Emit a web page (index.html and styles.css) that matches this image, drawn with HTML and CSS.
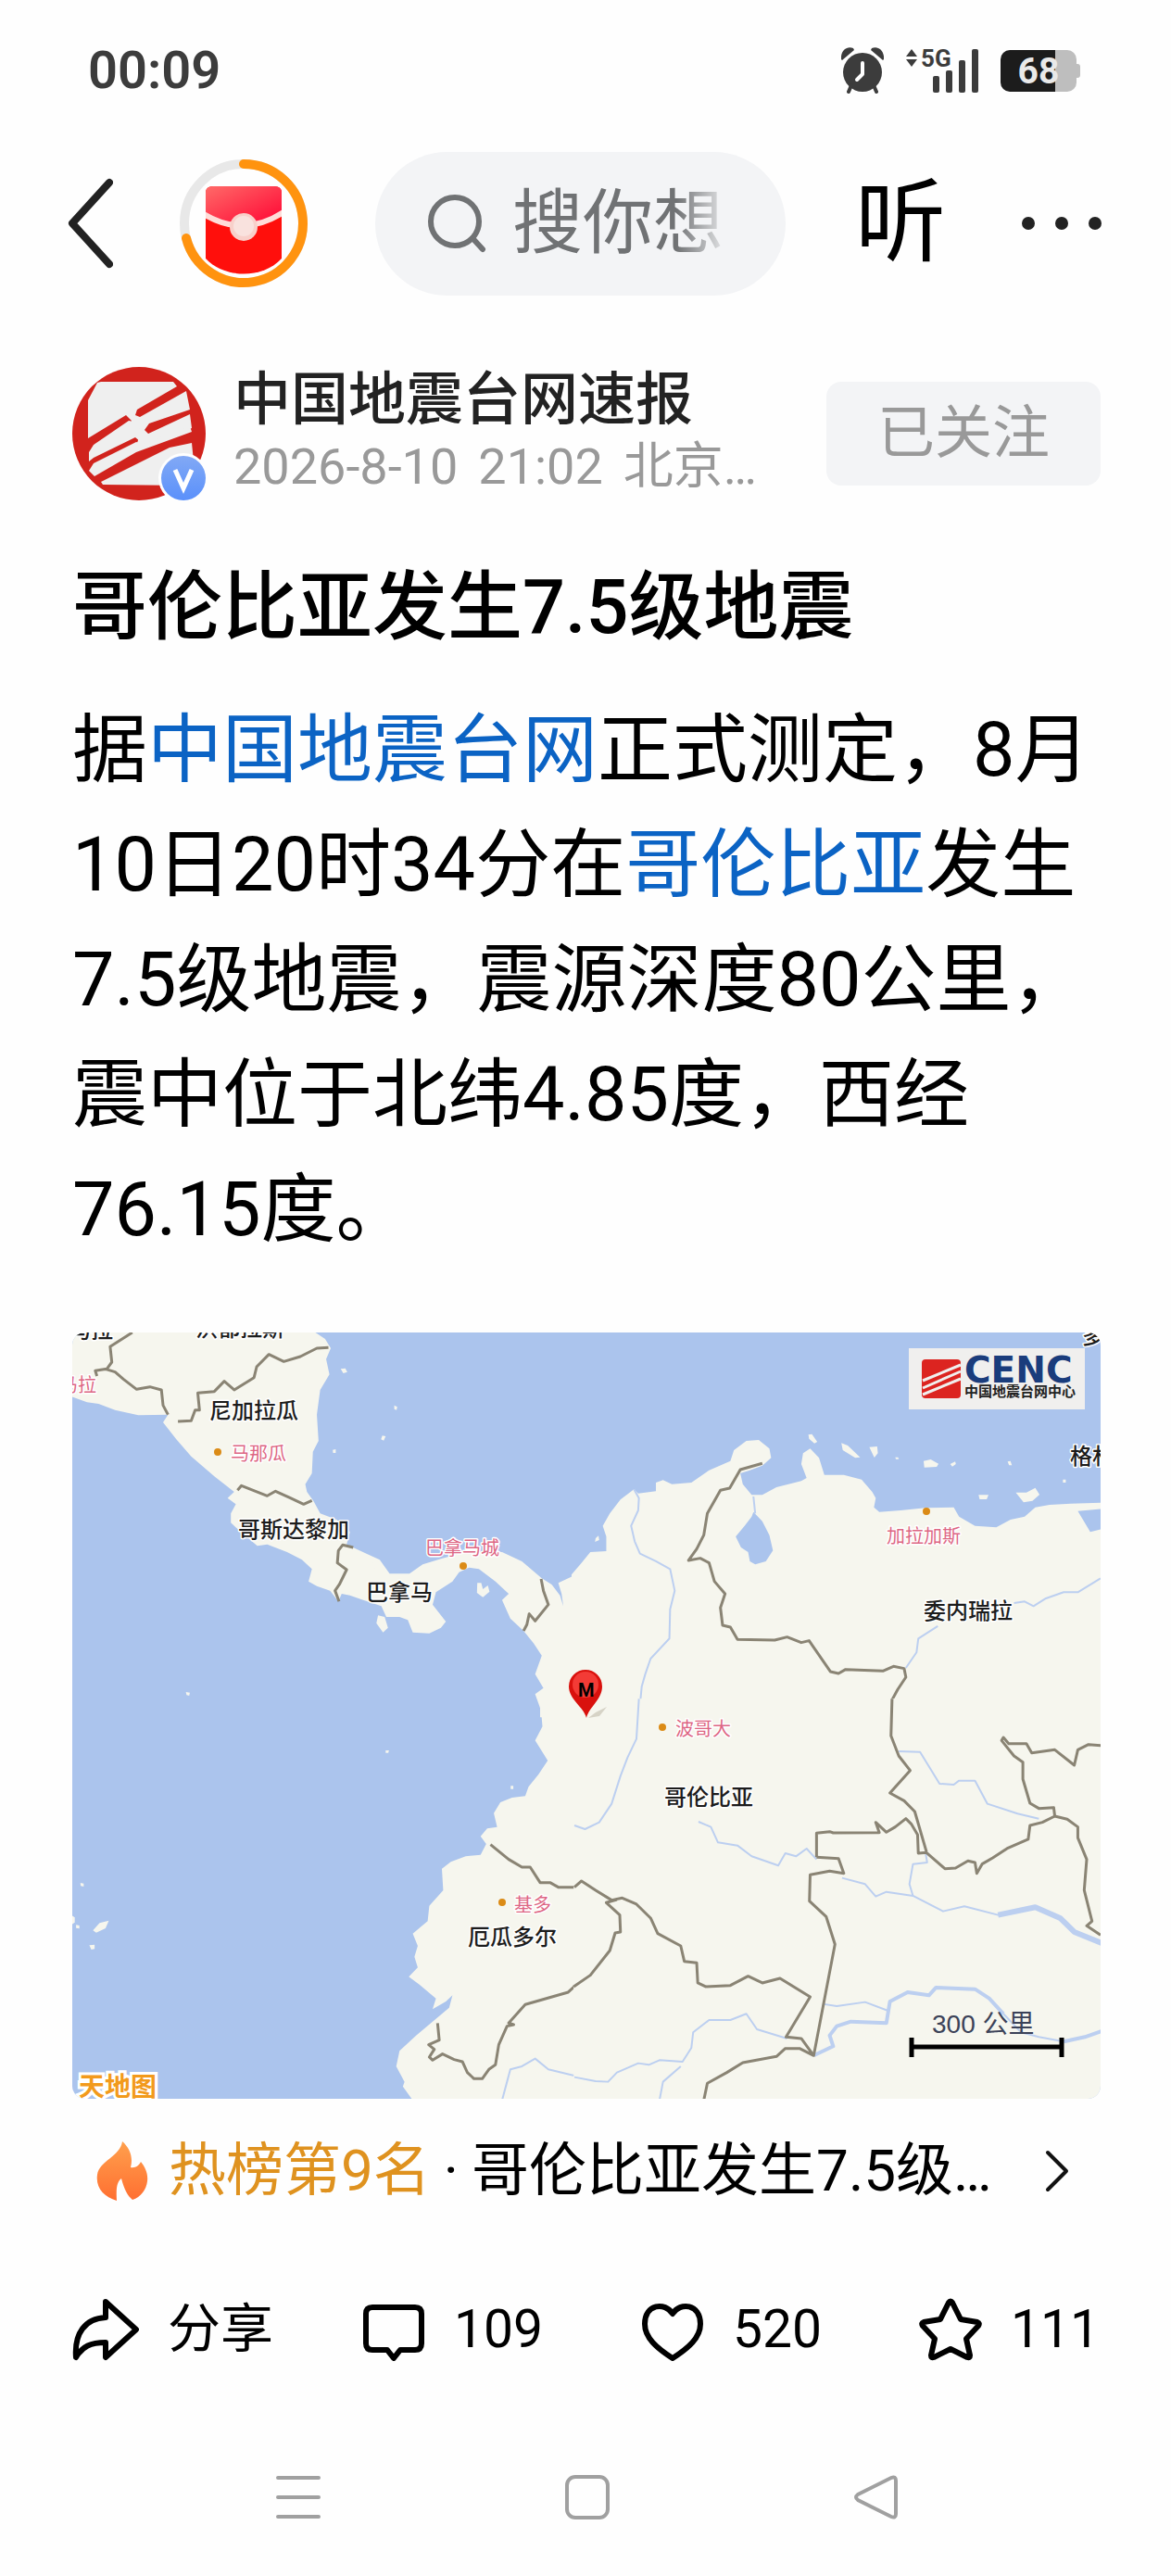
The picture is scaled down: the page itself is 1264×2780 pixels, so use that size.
FILE: index.html
```html
<!DOCTYPE html>
<html lang="zh-CN">
<head>
<meta charset="utf-8">
<meta name="viewport" content="width=device-width, initial-scale=1">
<title>哥伦比亚发生7.5级地震</title>
<link rel="stylesheet" href="styles.css">
</head>
<body>
<div class="status-bar">
  <span class="clock">00:09</span>
  <div class="status-icons">
    <svg class="alarm" viewBox="0 0 46 50" aria-hidden="true">
      <path d="M0 13C-1 4 6-2 13 1l1 2L1 14zM46 13C47 4 40-2 33 1l-1 2 13 11z" fill="#3c3c3c"/>
      <circle cx="23" cy="27" r="21" fill="#3c3c3c"/>
      <path d="M11 41l-3 7M35 41l3 7" stroke="#3c3c3c" stroke-width="4" stroke-linecap="round"/>
      <path d="M23 17v12l-6 6" fill="none" stroke="#fff" stroke-width="4" stroke-linecap="round" stroke-linejoin="round"/>
    </svg>
    <div class="signal">
      <svg viewBox="0 0 80 50" aria-hidden="true">
        <g fill="#3c3c3c">
          <path d="M7 2l6 8H1zM7 21l6-8H1z"/>
          <rect x="30" y="31" width="7" height="18" rx="2"/>
          <rect x="44" y="25" width="7" height="24" rx="2"/>
          <rect x="58" y="14" width="7" height="35" rx="2"/>
          <rect x="72" y="2" width="7" height="47" rx="2"/>
        </g>
      </svg>
      <span class="network">5G</span>
    </div>
    <div class="battery"><span class="battery-cell">68</span></div>
  </div>
</div>

<header class="top-bar">
  <button class="icon-button" type="button" aria-label="返回">
    <svg width="50" height="98" viewBox="0 0 50 98"><path d="M46 5L6 49l40 44" fill="none" stroke="#222" stroke-width="8" stroke-linecap="round" stroke-linejoin="round"/></svg>
  </button>
  <button class="icon-button" type="button" aria-label="红包">
    <svg width="139" height="139" viewBox="0 0 139 139">
      <defs>
        <linearGradient id="packet-top" x1="0" y1="0" x2="1" y2="1"><stop offset="0" stop-color="#ff6a68"/><stop offset="1" stop-color="#ff0433"/></linearGradient>
        <clipPath id="packet-clip"><path d="M28 36q0-7 8-7h66q8 0 8 7v71c-20 22-62 22-82 0z"/></clipPath>
      </defs>
      <circle cx="69" cy="69" r="64" fill="none" stroke="#e8e8e8" stroke-width="10"/>
      <path d="M69 5A64 64 0 1 1 7 85" fill="none" stroke="#ff930f" stroke-width="10" stroke-linecap="round"/>
      <g clip-path="url(#packet-clip)">
        <path d="M28 29h82v100H28z" fill="#ff0f0c"/>
        <path d="M28 29h82v30q-41 22-82 0z" fill="url(#packet-top)"/>
        <path d="M26 59q43 26 86-2" fill="none" stroke="#ffdcd8" stroke-width="6"/>
      </g>
      <circle cx="69" cy="73" r="15" fill="#f8d0ca"/>
      <circle cx="69" cy="72" r="11" fill="#f9e2de"/>
    </svg>
  </button>
  <label class="search">
    <svg width="64" height="64" viewBox="0 0 64 64" aria-hidden="true"><circle cx="30" cy="30" r="26" fill="none" stroke="#707274" stroke-width="6"/><path d="M49 48l11 12" stroke="#707274" stroke-width="6" stroke-linecap="round"/></svg>
    <input class="search-input" type="text" placeholder="搜你想" aria-label="搜索">
  </label>
  <button class="listen" type="button">听</button>
  <button class="icon-button" type="button" aria-label="更多">
    <svg width="96" height="20" viewBox="0 0 96 20"><g fill="#222"><circle cx="14" cy="10" r="7"/><circle cx="50" cy="10" r="7"/><circle cx="86" cy="10" r="7"/></g></svg>
  </button>
</header>

<main class="post">
  <section class="author">
    <div class="avatar">
      <svg width="144" height="144" viewBox="0 0 144 144" role="img" aria-label="中国地震台网速报">
        <defs><clipPath id="avatar-clip"><circle cx="72" cy="72" r="72"/></clipPath></defs>
        <g clip-path="url(#avatar-clip)">
          <path d="M0 0h144v144H0z" fill="#d1231d"/>
          <path d="M27 17l4-1 78 0 4 5-43 25-2 6 5 2 50-28 4 20-44 15-5 7 4 4 45-21 2 15-51 22-8-6 2-6-4-7-6-4 2-7-6-6L17 77V36z" fill="#efefef"/>
          <path d="M18 92l5-8 38-26 11 2 3 22-7-6-45 22-5 4zM18 112l5-8 46-23 8 2 50-19 2 6-60 22-45 26z" fill="#efefef"/>
          <path d="M31 124l74-37 24-5 2 20-8 26-90-1z" fill="#efefef"/>
        </g>
      </svg>
      <svg class="verified" width="54" height="54" viewBox="0 0 54 54" aria-label="认证">
        <defs><linearGradient id="badge" x1="0" y1="0" x2="0" y2="1"><stop offset="0" stop-color="#82a9f5"/><stop offset="1" stop-color="#5a90fb"/></linearGradient></defs>
        <circle cx="27" cy="27" r="27" fill="#fefefe"/><circle cx="27" cy="27" r="24" fill="url(#badge)"/>
        <path d="M18 18l9 20 9-20" fill="none" stroke="#fff" stroke-width="5"/>
      </svg>
    </div>
    <div class="author-text">
      <a class="author-name" href="#author">中国地震台网速报</a>
      <div class="author-meta"><span>2026-8-10</span><span>21:02</span><span>北京…</span></div>
    </div>
    <button class="follow" type="button">已关注</button>
  </section>

  <h1 class="title">哥伦比亚发生7.5级地震</h1>
  <p class="content">据<a href="#cenc">中国地震台网</a>正式测定，8月10日20时34分在<a href="#colombia">哥伦比亚</a>发生7.5级地震，震源深度80公里，震中位于北纬4.85度，西经76.15度。</p>

  <svg class="map" viewBox="0 0 1110 827" role="img" aria-label="震中位置地图">
    <rect width="1110" height="827" fill="#abc4ed"/>
    <!-- north-west tile -->
    <g class="tile" transform="translate(-18 -18) scale(.357 .3333)">
      <path class="land" d="M40 50H780L815 75 832 105 818 140 828 190 800 240 790 320 795 405 778 440 775 510 755 545 760 570 780 600 800 640 850 660 890 700 880 740 940 770 980 790 1010 835 1070 835 1110 805 1170 785 1240 765 1350 765 1410 795 1470 850 1500 870 1525 905 1535 940 1530 900 1520 865 1580 835V1300H1465L1465 1270 1450 1225 1475 1205 1450 1160 1470 1100 1445 1060 1415 1020 1375 980 1350 920 1370 900 1330 860 1280 820 1250 815 1220 830 1200 860 1150 895 1140 935 1180 990 1165 1010 1130 1028 1080 1025 1065 985 1040 975 1000 975 985 940 930 920 890 905 865 900 855 925 830 890 790 875 765 860 775 820 745 790 700 765 640 740 610 745 560 700 530 670 530 640 545 610 520 590 540 570 480 520 410 455 365 400 325 345 340 320 250 322 180 305 130 285 95 280 40 258z"/>
      <path class="land" d="M1275 865l12 0 5 20 15-12 5 20-20 18-18-14zM975 970l20 5 10 35-15 15-20-30zM862 172l14-2 6 12-12 4zM1024 290l9 5-2 10-7-3zM988 388l10 2-6 14-8-4zM838 434l9-2 0 12-8 0zM394 1218l12 2-2 10-8-2zM935 790l40 15-10 12-28-15z"/>
      <g class="border">
        <path d="M232 54L165 100 170 150 155 172 120 178 125 195M150 172L180 182 205 205 245 238 285 230 320 240 325 290 340 320M370 342L410 340 422 305 435 305 430 250 480 245 510 212 540 240 600 200 608 165 645 125 690 148 740 132 790 105 825 103"/>
        <path d="M550 565L562 550 640 583 665 568 710 590 750 610 775 598M900 750L868 742 855 760 852 800 880 822 858 870 845 890 857 925M1468 852L1475 890 1490 935 1450 988 1432 965 1425 1000 1415 1020"/>
      </g>
    </g>
    <!-- north-east tile -->
    <g class="tile" transform="translate(542 -18) scale(.3827 .3333)">
      <path class="land" d="M-8 838L20 800 45 765 90 762 90 715 80 680 100 640 130 595 168 562 180 575 230 568 230 540 250 532 275 545 330 540 380 500 440 470 450 435 485 405 520 402 550 430 555 460 530 485 495 500 468 510 475 545 500 580 530 580 570 555 640 535 655 525 640 480 645 445 665 430 690 460 705 515 760 515 810 530 840 570 850 590 845 620 860 635 920 630 990 622 1070 620 1085 650 1130 680 1190 685 1230 660 1270 650 1300 620 1340 612 1400 608 1490 605V1300H-8z"/>
      <path class="land" d="M660 385l10-2 15 25-8 5-15-15zM753 412l18 8 35 38-14 2-35-25zM832 425l22-2 2 22-10 14zM985 470l20-5 22 14-5 10-35 2zM1060 480l14-8 2 8-10 8zM1140 580l28 0-5 14-20 0zM1245 572l30 0 25-15 12 22-20 20-25 5zM1222 472l8-2 4 14-8 0zM1378 530l8 0 0 10-8 0zM60 720l8-8 2 14-12 6zM905 458l8 0 2 6-8 0z"/>
      <path fill="#abc4ed" d="M505 635L530 665 550 710 560 760 540 795 510 805 495 795 490 765 470 750 455 715 480 680 500 650zM1420 632L1490 625V690L1455 700z"/>
      <path class="river" d="M505 585L510 640M168 562L182 590 180 630 160 680 170 730 185 770 230 795 270 820 283 890 270 950 268 1045 215 1110 200 1160 190 1200 182 1295M935 1140L965 1090 970 1045 1025 1005M1240 930L1270 925 1295 940 1330 915 1380 895 1420 895 1484 850"/>
      <path class="border" d="M530 478L468 498 438 558 412 565 375 640 365 710 345 755 322 792 355 785 380 800 395 860 425 900 412 945 418 1002 440 1008 460 1048 565 1050 600 1040 640 1058 662 1052 722 1152 745 1158 765 1145 870 1150 900 1135 930 1142 935 1170 912 1210 893 1250 896 1300"/>
    </g>
    <!-- south-west tile -->
    <g class="tile" transform="translate(-18 402) scale(.357 .3333)">
      <path class="land" d="M1465 -20L1472 70 1450 115 1488 180 1460 225 1430 265 1420 295 1380 300 1345 315 1325 350 1335 395 1305 400 1285 425 1302 450 1285 485 1240 490 1195 508 1168 530 1172 600 1130 650 1125 700 1080 740 1095 780 1085 815 1095 850 1068 880 1100 905 1150 950 1140 985 1180 960 1200 940 1190 980 1140 1025 1090 1070 1040 1120 1030 1170 1055 1220 1050 1235 1080 1280H1580V-20z"/>
      <path class="land" d="M998 147l10 0-2 8-8 0zM75 576l10 2 0 10-9-2zM113 730l20-24 28-8-10 25-28 14zM62 712l10 2 0 10-10-2zM102 778l16-2 0 14-10 2zM1376 262l8 0 0 10-8 0zM50 682l8 6 0 16-8 6z"/>
      <path class="river" d="M1350 1280L1365 1220 1375 1180 1410 1170 1450 1145 1490 1180 1568 1200 1575 1204"/>
      <path class="border" d="M1315 452L1370 500 1410 525 1435 525 1465 575 1495 575 1520 590 1570 590M1570 910L1550 930 1420 970 1395 1000 1370 1030 1385 1035 1365 1040 1340 1100 1330 1165 1310 1180 1290 1210 1265 1210 1245 1190 1230 1155 1205 1148 1170 1130 1140 1150 1130 1140 1145 1115 1128 1100 1160 1085 1155 1030"/>
    </g>
    <!-- south-east tile -->
    <g class="tile" transform="translate(542 402) scale(.3827 .3333)">
      <path class="land" d="M-2 -20H1490V1290H-2z"/>
      <path class="river" d="M182 -20L175 110 150 170 130 230 105 320 70 380 30 402 0 390M350 378L385 395 405 445 460 455 500 490 575 520 595 480 625 490 655 465 683 500M755 560L820 580 850 620 880 605 955 618 1040 668 1100 652 1195 680 1300 655 1370 690M990 475L995 510 955 515 945 580 955 618M915 150L975 152 1030 255 1070 258 1085 245 1130 245 1165 320 1250 352 1310 368"/>
      <path class="river" d="M0 1205L60 1218 95 1220 120 1190 180 1160 210 1165 240 1150 305 1155 330 1110 335 1060 380 1020 440 1020 485 1000 515 1050 600 1080M240 1280L250 1220 300 1170M700 968L740 975 820 962 885 990M1210 1000L1260 1060 1310 1075 1380 1090"/>
      <path class="river mid" d="M675 1135L730 1105 720 1070 740 1040 780 1025 880 1030 890 960 940 930 1000 940 1020 915 1130 920 1170 950 1210 1000M1380 1090L1440 1075 1490 1055"/>
      <path class="river wide" d="M1195 680L1300 655 1370 690 1410 735 1490 772"/>
      <path class="border" d="M896 -20L893 100 915 165 947 212 890 285 930 310 960 345 993 475M683 493V415L720 410 730 414 860 413 850 380 880 412 905 395 935 368 950 385 968 420 970 480 993 478 1045 530 1075 528 1110 505 1130 510 1135 545 1150 515 1180 495 1220 465 1280 435 1285 390 1320 380 1355 360 1352 332 1310 335 1285 318 1265 240 1265 185 1240 165 1205 115 1210 105 1225 125 1275 125 1290 155 1355 145 1410 195 1420 145 1450 128 1490 132"/>
      <path class="border" d="M683 493L745 497 760 545 720 538 665 550 663 635 710 685 735 775 675 1135 640 1080 597 1075 665 945 580 885 530 900 490 878 440 908 370 912 348 900 345 835 310 830 300 780 235 740 215 690 175 645 135 625 105 632 60 600 20 570 0 590M120 630L90 640 128 680 130 735 115 738 100 795 45 875 -2 912M675 1135L635 1112 595 1112 570 1138 475 1158 430 1190 375 1225 365 1280M1355 360L1390 370 1420 395 1420 430 1445 500 1438 600 1460 700 1445 715 1484 745"/>
    </g>

    <g fill="#db8b16"><circle cx="157" cy="129" r="4"/><circle cx="422" cy="252" r="4"/><circle cx="922" cy="193" r="4"/><circle cx="637" cy="426" r="4"/><circle cx="464" cy="615" r="4"/></g>
    <g class="country">
      <text x="-4" y="6">马拉</text><text x="133" y="4">洪都拉斯</text><text x="148" y="93">尼加拉瓜</text>
      <text x="179" y="221">哥斯达黎加</text><text x="317" y="289">巴拿马</text><text x="919" y="309">委内瑞拉</text>
      <text x="1077" y="142">格林</text><text x="1090" y="12">多</text><text x="639" y="510">哥伦比亚</text><text x="427" y="661">厄瓜多尔</text>
    </g>
    <g class="city">
      <text x="-14" y="64">马拉</text><text x="171" y="138">马那瓜</text><text x="381" y="240">巴拿马城</text>
      <text x="879" y="227">加拉加斯</text><text x="651" y="435">波哥大</text><text x="477" y="625">基多</text>
    </g>
    <text class="watermark" x="7" y="824">天地图</text>

    <rect x="903" y="17" width="190" height="66" fill="#f0efee"/>
    <rect x="917" y="29" width="42" height="42" rx="4" fill="#dc2420"/>
    <path d="M918 52L959 35M918 60L959 42M918 67L959 50" stroke="#f0efee" stroke-width="3"/>
    <text class="logo" x="963" y="54">CENC</text>
    <text class="logo-sub" x="963" y="69">中国地震台网中心</text>

    <path d="M557 416l8-6 12-6-8 10z" fill="#d6d3c6"/>
    <path d="M555 416C552 404 536 396 536 382a18 18 0 0 1 36 0C572 396 558 404 555 416z" fill="#d9110d"/>
    <circle cx="554" cy="380" r="14" fill="#f33b36"/>
    <text class="pin-label" x="546" y="393">M</text>

    <text class="scale-label" x="928" y="756">300 公里</text>
    <path d="M906 761v21M1068 761v21M906 771h162" fill="none" stroke="#000" stroke-width="5"/>
  </svg>

  <a class="hot" href="#hot">
    <svg width="56" height="66" viewBox="0 0 56 66" aria-hidden="true">
      <defs><linearGradient id="flame" x1="0" y1="0" x2="0" y2="1"><stop offset="0" stop-color="#ffa04d"/><stop offset="1" stop-color="#ff6f31"/></linearGradient></defs>
      <path d="M28 1c8 7 12 17 9 28 5 1 9-2 11-6 5 6 8 13 7 21-1 9-7 17-16 20-5-4-9-11-12-23-4 3-6 8-5 24C8 61-1 51 1 37 3 22 26 17 28 1z" fill="url(#flame)"/>
    </svg>
    <span class="hot-rank">热榜第9名</span>
    <span class="hot-dot">·</span>
    <span class="hot-topic">哥伦比亚发生7.5级…</span>
    <svg width="28" height="48" viewBox="0 0 28 48" aria-hidden="true"><path d="M3 4l20 20L3 44" fill="none" stroke="#111" stroke-width="4" stroke-linecap="round" stroke-linejoin="round"/></svg>
  </a>

  <div class="actions">
    <button class="action" type="button">
      <svg width="72" height="68" viewBox="0 0 72 68" aria-hidden="true"><path d="M36 4L69 34 36 64V48C20 48 11 52 4 64 2 38 14 22 36 21z"/></svg>分享
    </button>
    <button class="action" type="button" aria-label="评论 109">
      <svg width="68" height="68" viewBox="0 0 68 68" aria-hidden="true"><path d="M11 10h46q7 0 7 7v32q0 7-7 7H41l-7 9-7-9H11q-7 0-7-7V17q0-7 7-7z"/></svg>109
    </button>
    <button class="action" type="button" aria-label="喜欢 520">
      <svg width="68" height="68" viewBox="0 0 68 68" aria-hidden="true"><path d="M34 17C26 4 4 6 4 28 4 43 17 54 34 65 51 54 64 43 64 28 64 6 42 4 34 17z"/></svg>520
    </button>
    <button class="action" type="button" aria-label="收藏 111">
      <svg width="68" height="68" viewBox="0 0 68 68" aria-hidden="true"><path d="M32 5q2-3 4 0l9 18 18 3q3 1 1 4L51 44l4 18q0 3-3 2L34 55 16 64q-3 1-3-2l4-18L4 30q-2-3 1-4l18-3z"/></svg>111
    </button>
  </div>
</main>

<nav class="system-nav">
  <button class="icon-button" type="button" aria-label="任务"><svg width="48" height="48" viewBox="0 0 48 48"><path d="M2 3h44M2 24h44M2 45h44"/></svg></button>
  <button class="icon-button" type="button" aria-label="主屏幕"><svg width="48" height="48" viewBox="0 0 48 48"><rect x="2" y="2" width="44" height="44" rx="9"/></svg></button>
  <button class="icon-button" type="button" aria-label="后退"><svg width="48" height="48" viewBox="0 0 48 48"><path d="M4 21L40 3q5-2 5 3v36q0 5-5 3L4 27q-4-3 0-6z"/></svg></button>
</nav>
</body>
</html>
```
FILE: styles.css
```css
* { box-sizing: border-box; }

body {
  margin: 0;
  background: #fefefe;
  color: #000;
  font-family: Roboto, "Noto Sans CJK SC", sans-serif;
}

button {
  margin: 0;
  padding: 0;
  border: 0;
  background: none;
  color: inherit;
  font: inherit;
}

a { color: inherit; text-decoration: none; }
svg { display: block; flex: none; }
.icon-button { display: flex; flex: none; }

/* status bar */
.status-bar {
  display: flex;
  align-items: center;
  justify-content: space-between;
  height: 152px;
  padding: 0 102px 0 95px;
}
.clock { color: #3c3c3c; font-size: 56px; font-weight: 600; line-height: 64px; }
.status-icons { display: flex; align-items: center; gap: 23px; }
.alarm { width: 46px; height: 50px; }
.signal { position: relative; }
.signal svg { width: 80px; height: 50px; }
.network {
  position: absolute;
  top: 0;
  left: 17px;
  color: #3c3c3c;
  font-size: 26px;
  font-weight: 700;
  line-height: 24px;
}
.battery {
  position: relative;
  width: 82px;
  height: 45px;
  border-radius: 10px;
  background: linear-gradient(90deg, #1c1c1c 59px, #bebebe 59px);
}
.battery::after {
  content: "";
  position: absolute;
  top: 15px;
  right: -4px;
  width: 4px;
  height: 15px;
  border-radius: 0 3px 3px 0;
  background: #bebebe;
}
.battery-cell {
  display: block;
  color: #e9e9e9;
  font-size: 39px;
  font-weight: 700;
  line-height: 46px;
  text-align: center;
}

/* top bar */
.top-bar {
  display: flex;
  align-items: center;
  gap: 72px;
  height: 178px;
  padding: 0 72px;
}
.search {
  display: flex;
  flex: 1;
  align-items: center;
  gap: 28px;
  min-width: 0;
  height: 155px;
  padding: 0 68px 0 56px;
  border-radius: 78px;
  background: #f3f4f6;
}
.search-input {
  flex: 1;
  min-width: 0;
  padding: 0;
  border: 0;
  outline: 0;
  background: none;
  color: #707274;
  font: inherit;
  font-size: 76px;
  line-height: 100px;
  -webkit-mask-image: linear-gradient(90deg, #000 78%, transparent 104%);
  mask-image: linear-gradient(90deg, #000 78%, transparent 104%);
}
.search-input::placeholder { color: #707274; opacity: 1; }
.listen {
  width: 104px;
  font-size: 98px;
  font-weight: 400;
  line-height: 120px;
}

/* post */
.post { padding: 66px 76px 0 78px; }
.author { display: flex; align-items: center; }
.avatar { position: relative; flex: none; }
.verified { position: absolute; right: -3px; bottom: -3px; }
.author-text { flex: 1; min-width: 0; padding-left: 30px; }
.author-name {
  display: block;
  color: #222;
  font-size: 62px;
  font-weight: 500;
  line-height: 72px;
}
.author-meta {
  display: flex;
  gap: 22px;
  color: #999;
  font-size: 54px;
  line-height: 72px;
  white-space: nowrap;
}
.follow {
  width: 296px;
  height: 112px;
  border-radius: 16px;
  background: #f3f4f6;
  color: #999;
  font-size: 62px;
  line-height: 112px;
}
.title {
  margin: 66px 0 42px;
  font-size: 81px;
  font-weight: 500;
  line-height: 100px;
}
.content { margin: 0; font-size: 81px; line-height: 124px; }
.content a { color: #0b63c4; }

/* map */
.map {
  width: 100%;
  height: auto;
  margin-top: 70px;
  border-radius: 14px;
}
.land { fill: #f6f6ee; }
.tile path { vector-effect: non-scaling-stroke; stroke-linejoin: round; }
.tile .river { fill: none; stroke: #bccff0; stroke-width: 2px; }
.tile .mid { stroke-width: 4px; }
.tile .wide { stroke-width: 6px; }
.tile .border, .tile .border path { fill: none; stroke: #8a8474; stroke-width: 3px; }
.country, .city { paint-order: stroke; stroke: #fff; stroke-width: 3px; stroke-linejoin: round; }
.country { fill: #1c1c1c; font-size: 24px; font-weight: 500; }
.city { fill: #dd6684; font-size: 20px; }
.watermark {
  fill: #f29a1c;
  stroke: #fff;
  stroke-width: 6px;
  paint-order: stroke;
  font-size: 28px;
  font-weight: 700;
}
.logo { fill: #1a3c7c; font-family: "DejaVu Sans", sans-serif; font-size: 39px; font-weight: 700; }
.logo-sub { fill: #222; font-size: 15px; font-weight: 700; }
.pin-label { font-size: 20px; font-weight: 700; }
.scale-label {
  fill: #3b4258;
  font-family: "Liberation Sans", "Noto Sans CJK SC", sans-serif;
  font-size: 28px;
}

/* trending link */
.hot {
  display: flex;
  align-items: center;
  height: 100px;
  margin-top: 28px;
  padding: 0 32px 0 26px;
  font-size: 62px;
  line-height: 100px;
  white-space: nowrap;
}
.hot-rank { margin-left: 22px; color: #df921f; }
.hot-dot { padding: 0 14px; }
.hot-topic { flex: 1; min-width: 0; overflow: hidden; }

/* actions */
.actions {
  display: grid;
  grid-template-columns: 313fr 301fr 300fr 196fr;
  margin-top: 81px;
}
.action {
  display: flex;
  align-items: center;
  gap: 31px;
  height: 80px;
  font-size: 57px;
  line-height: 80px;
  white-space: nowrap;
}
.action path { fill: none; stroke: #000; stroke-width: 6px; stroke-linejoin: round; }

/* system navigation */
.system-nav {
  display: grid;
  grid-template-columns: repeat(3, 1fr);
  justify-items: center;
  padding: 117px 162px 61px 166px;
}
.system-nav svg { fill: none; stroke: #a0a0a0; stroke-width: 4px; stroke-linecap: round; }
```
